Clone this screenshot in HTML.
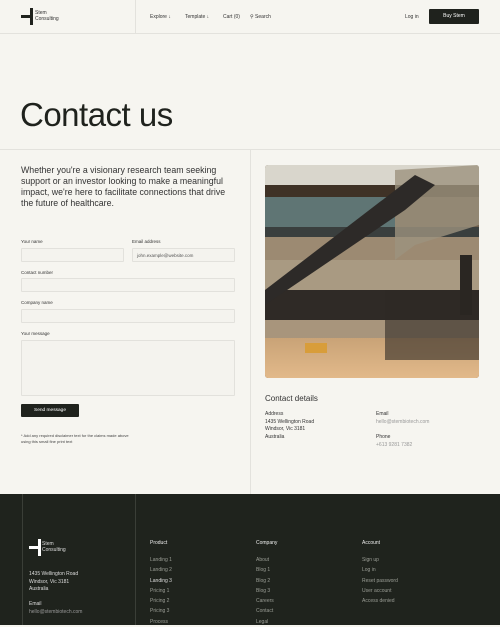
<!DOCTYPE html>
<html><head><meta charset="utf-8"><style>
*{margin:0;padding:0;box-sizing:border-box}
body{width:500px;height:625px;overflow:hidden;background:#f6f5f0;font-family:"Liberation Sans",sans-serif;color:#1f221d;position:relative}
.a{position:absolute;white-space:nowrap}
.s5{font-size:5px}
.in{position:absolute;border:1px solid #e2e1dc;background:#f4f3ee;border-radius:1px}
.lbl{font-size:4.5px;color:#333}
.f{color:#9a9d95;font-size:5px}
</style></head><body>
<!-- header -->
<div class="a" style="left:0;top:33px;width:500px;height:1px;background:#e3e2dd"></div>
<div class="a" style="left:135px;top:0;width:1px;height:33px;background:#e3e2dd"></div>
<div class="a" style="left:21px;top:15px;width:10px;height:3px;background:#1f221d"></div>
<div class="a" style="left:30px;top:8px;width:3px;height:17px;background:#1f221d"></div>
<div class="a s5" style="left:35px;top:11px;line-height:5.5px;color:#333">Stem<br>Consulting</div>
<div class="a s5" style="left:150px;top:14px;color:#333">Explore ↓</div>
<div class="a s5" style="left:185px;top:14px;color:#333">Template ↓</div>
<div class="a s5" style="left:223px;top:14px;color:#333">Cart (0)</div>
<div class="a s5" style="left:250px;top:14px;color:#333">⚲ Search</div>
<div class="a s5" style="left:405px;top:14px;color:#333">Log in</div>
<div class="a" style="left:429px;top:9px;width:50px;height:15px;background:#1f221d;border-radius:1px;color:#fff;font-size:5px;text-align:center;line-height:15px">Buy Stem</div>
<!-- hero -->
<div class="a" style="left:20px;top:95px;font-size:33px;letter-spacing:-0.5px;line-height:40px">Contact us</div>
<div class="a" style="left:0;top:149px;width:500px;height:1px;background:#e3e2dd"></div>
<div class="a" style="left:250px;top:150px;width:1px;height:345px;background:#e3e2dd"></div>
<div class="a" style="left:21px;top:165px;font-size:8.8px;line-height:11px;color:#333;white-space:normal;width:215px">Whether you're a visionary research team seeking support or an investor looking to make a meaningful impact, we're here to facilitate connections that drive the future of healthcare.</div>
<!-- form -->
<div class="a lbl" style="left:21px;top:239px">Your name</div>
<div class="a lbl" style="left:132px;top:239px">Email address</div>
<div class="in" style="left:21px;top:248px;width:103px;height:14px"></div>
<div class="in" style="left:132px;top:248px;width:103px;height:14px"></div>
<div class="a lbl" style="left:137px;top:253px;color:#555">john.example@website.com</div>
<div class="a lbl" style="left:21px;top:270px">Contact number</div>
<div class="in" style="left:21px;top:278px;width:214px;height:14px"></div>
<div class="a lbl" style="left:21px;top:300px">Company name</div>
<div class="in" style="left:21px;top:309px;width:214px;height:14px"></div>
<div class="a lbl" style="left:21px;top:331px">Your message</div>
<div class="in" style="left:21px;top:340px;width:214px;height:56px"></div>
<div class="a" style="left:21px;top:404px;width:58px;height:13px;background:#1f221d;border-radius:1px;color:#fff;font-size:4.8px;text-align:center;line-height:13px">Send message</div>
<div class="a" style="left:21px;top:433px;font-size:4px;line-height:5.5px;color:#444">* Add any required disclaimer text for the claims made above<br>using this small fine print text</div>
<!-- image -->
<svg class="a" style="left:265px;top:165px" width="214" height="213" viewBox="0 0 214 213">
<defs><clipPath id="c"><rect width="214" height="213" rx="3"/></clipPath>
<linearGradient id="fl" x1="0" y1="0" x2="0" y2="1"><stop offset="0" stop-color="#c9a377"/><stop offset="1" stop-color="#e2b98a"/></linearGradient></defs>
<g clip-path="url(#c)">
<rect width="214" height="213" fill="#6e5e4c"/>
<rect width="214" height="20" fill="#d9d6cc"/>
<rect y="20" width="214" height="12" fill="#3f3226"/>
<rect y="32" width="130" height="30" fill="#5f7574"/>
<rect y="62" width="214" height="10" fill="#3a3f3e"/>
<rect y="72" width="214" height="50" fill="#9c8a72"/>
<rect y="95" width="214" height="30" fill="#a99a82"/>
<rect y="125" width="214" height="30" fill="#2f2a26"/>
<rect y="155" width="214" height="18" fill="#a8957c"/>
<rect y="173" width="214" height="40" fill="url(#fl)"/>
<rect x="40" y="178" width="22" height="10" fill="#d89d3a"/>
<polygon points="130,5 214,0 214,60 150,80 130,95" fill="#9c927e" opacity=".8"/>
<polygon points="0,125 0,140 140,45 170,20 150,10" fill="#2d2a28"/>
<rect x="120" y="125" width="94" height="70" fill="#2e2925" opacity=".6"/>
<rect x="195" y="90" width="12" height="60" fill="#2a2622"/>
</g></svg>
<!-- contact details -->
<div class="a" style="left:265px;top:394px;font-size:8px;color:#333">Contact details</div>
<div class="a s5" style="left:265px;top:411px;line-height:7.5px;color:#333">Address<br>1435 Wellington Road<br>Windsor, Vic 3181<br>Australia</div>
<div class="a s5" style="left:376px;top:411px;line-height:7.5px;color:#333">Email<br><span style="color:#999">hello@stembiotech.com</span></div>
<div class="a s5" style="left:376px;top:434px;line-height:7.5px;color:#333">Phone<br><span style="color:#999">+613 9281 7382</span></div>
<!-- footer -->
<div class="a" style="left:0;top:494px;width:500px;height:131px;background:#1f231d"></div>
<div class="a" style="left:22px;top:494px;width:1px;height:131px;background:#3a3e37"></div>
<div class="a" style="left:135px;top:494px;width:1px;height:131px;background:#3a3e37"></div>
<div class="a" style="left:29px;top:546px;width:11px;height:3px;background:#fff"></div>
<div class="a" style="left:38px;top:539px;width:3px;height:17px;background:#fff"></div>
<div class="a s5" style="left:42px;top:542px;line-height:5.5px;color:#ddd">Stem<br>Consulting</div>
<div class="a s5" style="left:29px;top:571px;line-height:7.5px;color:#ddd">1435 Wellington Road<br>Windsor, Vic 3181<br>Australia</div>
<div class="a s5" style="left:29px;top:601px;line-height:7.5px;color:#ddd">Email<br><span style="color:#999">hello@stembiotech.com</span></div>
<div class="a s5" style="left:150px;top:540px;color:#eee">Product</div>
<div class="a f" style="left:150px;top:555px;line-height:10.3px">Landing 1<br>Landing 2<br><span style="color:#ddd">Landing 3</span><br>Pricing 1<br>Pricing 2<br>Pricing 3<br>Process</div>
<div class="a s5" style="left:256px;top:540px;color:#eee">Company</div>
<div class="a f" style="left:256px;top:555px;line-height:10.3px">About<br>Blog 1<br>Blog 2<br>Blog 3<br>Careers<br>Contact<br>Legal</div>
<div class="a s5" style="left:362px;top:540px;color:#eee">Account</div>
<div class="a f" style="left:362px;top:555px;line-height:10.3px">Sign up<br>Log in<br>Reset password<br>User account<br>Access denied</div>
</body></html>
